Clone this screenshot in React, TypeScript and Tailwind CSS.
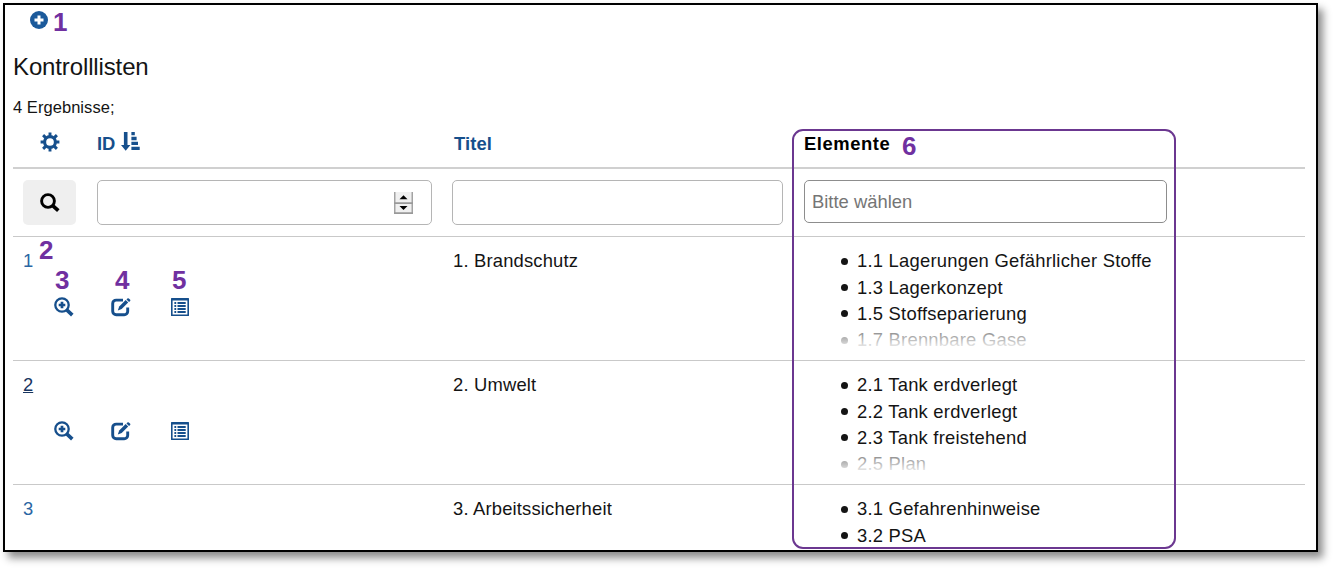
import React from 'react';

type IconProps = { className?: string };

const PlusCircle = ({ className }: IconProps) => (
  <svg viewBox="0 0 18 18" className={className}>
    <circle cx="9" cy="9" r="9" fill="currentColor" />
    <path d="M9 4.5v9M4.5 9h9" stroke="#fff" strokeWidth="3" />
  </svg>
);

const Cog = ({ className }: IconProps) => (
  <svg viewBox="0 0 20 20" className={className} fill="none" stroke="currentColor">
    <circle cx="10" cy="10" r="5.4" strokeWidth="3.1" />
    <path
      d="M10 .6v3.4M10 16v3.4M.6 10h3.4M16 10h3.4M3.1 3.1l2.5 2.5M14.4 14.4l2.5 2.5M16.9 3.1l-2.5 2.5M5.6 14.4l-2.5 2.5"
      strokeWidth="2.9"
    />
  </svg>
);

const SortByAttributes = ({ className }: IconProps) => (
  <svg viewBox="0 0 19 19" className={className} fill="currentColor">
    <path d="M2.9 0h3.6v13h2.9L4.7 18.8 0 13h2.9z" />
    <path d="M10.4 0h3.4v3.3h-3.4zM10.4 4.8h5.2v3.4h-5.2zM10.4 9.8h6.6v3.3h-6.6zM10.4 14.7h8.3V18h-8.3z" />
  </svg>
);

const Search = ({ className }: IconProps) => (
  <svg viewBox="0 0 20 20" className={className} fill="none" stroke="currentColor">
    <circle cx="8" cy="8" r="6.4" strokeWidth="2.9" />
    <path d="M12.4 12.4l5.9 5.3" strokeWidth="3.7" />
  </svg>
);

const ZoomIn = ({ className }: IconProps) => (
  <svg viewBox="0 0 20 20" className={className} fill="none" stroke="currentColor">
    <circle cx="8" cy="8" r="6.7" strokeWidth="2.3" />
    <path d="M12.5 12.6l5.8 5.5" strokeWidth="3.6" />
    <path d="M8 4.7v6.6M4.7 8h6.6" strokeWidth="2.7" />
  </svg>
);

const Edit = ({ className }: IconProps) => (
  <svg viewBox="0 0 20 20" className={className} fill="none" stroke="currentColor">
    <path d="M12 3.1H5.2A3.5 3.5 0 0 0 1.7 6.6v7.7a3.5 3.5 0 0 0 3.5 3.5h8a3.5 3.5 0 0 0 3.5-3.5V10.5" strokeWidth="2.9" />
    <path d="M8.2 9.6l6.5-6.6 2.5 2.4-6.5 6.6-3.9 1.5z" fill="currentColor" stroke="none" />
    <path d="M15.5 2.4l.9-.9q.7-.5 1.4 0l1.4 1.2q.4.6 0 1.2l-1.2 1.1z" fill="currentColor" stroke="none" />
  </svg>
);

const ListAlt = ({ className }: IconProps) => (
  <svg viewBox="0 0 18 18" className={className} fill="currentColor">
    <path fillRule="evenodd" d="M.6 0h16.8q.6 0 .6.6v16.8q0 .6-.6.6H.6q-.6 0-.6-.6V.6Q0 0 .6 0zM1.6 2.6v13.8h14.8V2.6z" />
    <path d="M3.4 4h1.8v1.9H3.4zM3.4 7h1.8v1.9H3.4zM3.4 10h1.8v1.9H3.4zM3.4 13h1.8v1.9H3.4zM6.5 4h8.2v1.9H6.5zM6.5 7h8.2v1.9H6.5zM6.5 10h8.2v1.9H6.5zM6.5 13h8.2v1.9H6.5z" />
  </svg>
);

const Spinner = () => (
  <svg viewBox="0 0 19 22" className="h-[22px] w-[19px]">
    <rect width="19" height="22" fill="#f0f0f0" />
    <path d="M.75 0v22M18.25 0v22" stroke="#a3a3a3" strokeWidth="1.5" />
    <path d="M0 11.2h19M0 21.2h19" stroke="#999" strokeWidth="1.7" />
    <path d="M5.5 7.3l4-4 4 4zM5.5 14h8l-4 4z" fill="#000" />
  </svg>
);

const rows = [
  { id: '1', title: '1. Brandschutz', items: ['1.1 Lagerungen Gefährlicher Stoffe', '1.3 Lagerkonzept', '1.5 Stoffseparierung', '1.7 Brennbare Gase'] },
  { id: '2', title: '2. Umwelt', items: ['2.1 Tank erdverlegt', '2.2 Tank erdverlegt', '2.3 Tank freistehend', '2.5 Plan'] },
  { id: '3', title: '3. Arbeitssicherheit', items: ['3.1 Gefahrenhinweise', '3.2 PSA'] },
];

const markers = [
  { n: '1', pos: 'left-[48px] top-[2px]' },
  { n: '2', pos: 'left-[34px] top-[230px]' },
  { n: '3', pos: 'left-[50px] top-[260px]' },
  { n: '4', pos: 'left-[110px] top-[260px]' },
  { n: '5', pos: 'left-[167px] top-[260px]' },
  { n: '6', pos: 'left-[897px] top-[126px]' },
];

export default function App() {
  return (
    <div className="h-[568px] w-[1338px] overflow-hidden bg-white pl-[3px] pt-[3px] font-['Liberation_Sans',Arial,sans-serif] text-[18.4px] tracking-[0.23px] text-[#141414]">
      <div className="relative h-[549px] w-[1315px] border-2 border-black bg-white pl-2 pr-[11px] shadow-[5px_6px_8px_rgba(0,0,0,0.45)]">
        <div className="flex h-[44px] pl-[17px] pt-[6px] text-[#1b5a9b]">
          <PlusCircle className="size-[18px]" />
        </div>
        <h1 className="h-[45px] text-[24px] leading-[36px] tracking-[-0.13px]">Kontrolllisten</h1>
        <p className="h-[29px] text-[16.5px] leading-[27px] tracking-[0.05px]">4 Ergebnisse;</p>

        <div className="grid h-[46px] grid-cols-[84px_357px_350px_1fr] border-b-2 border-[#d0d0d0] font-bold leading-[42px] text-[#164f8c]">
          <div className="pl-[27px] pt-[9px]"><Cog className="size-[20px]" /></div>
          <div className="flex"><span className="tracking-normal">ID</span><SortByAttributes className="ml-[6px] mt-[9px] size-[19px]" /></div>
          <div className="tracking-[0.1px]">Titel</div>
          <div className="tracking-[0.55px] text-black">Elemente</div>
        </div>

        <div className="grid h-[68px] grid-cols-[84px_355px_352px_1fr] items-start border-b border-[#c9c9c9] pt-[11px]">
          <button className="ml-[10px] flex h-[45px] w-[53px] items-center justify-center rounded-[5px] bg-[#efefef] text-black">
            <Search className="size-[20px]" />
          </button>
          <div className="flex h-[45px] w-[335px] items-center justify-end rounded-[5px] border border-[#b5b5b5] pr-[18px]"><Spinner /></div>
          <div className="h-[45px] w-[331px] rounded-[5px] border border-[#b5b5b5]" />
          <div className="h-[43px] w-[363px] rounded-[5px] border border-[#8d8d8d] pl-[7px] leading-[42px] tracking-[0px] text-[#757575]">Bitte wählen</div>
        </div>

        {rows.map((row, r) => (
          <div key={row.id} className={`grid grid-cols-[440px_351px_1fr] pt-[11px] ${r < 2 ? 'h-[124px] border-b border-[#c9c9c9]' : 'h-[64px]'}`}>
            <div>
              <a className={`ml-[10px] block h-[27px] w-fit leading-[26px] tracking-normal ${row.id === '2' ? 'text-[#18355f] underline' : 'text-[#2a66a3]'}`}>{row.id}</a>
              {r < 2 && (
                <div className="flex items-start pl-[41px] pt-[22px] text-[#164f8c]">
                  <ZoomIn className="size-[20px]" />
                  <Edit className="ml-[37px] size-[20px]" />
                  <ListAlt className="ml-[40px] mt-px size-[18px]" />
                </div>
              )}
            </div>
            <div className="leading-[26px] tracking-[0.18px]">{row.title}</div>
            <div className="relative">
              <ul className="pl-[37px]">
                {row.items.map((item) => (
                  <li key={item} className="flex h-[26.4px] items-center leading-[26px]">
                    <span className="mr-[9px] size-[7px] rounded-full bg-[#141414]" />
                    {item}
                  </li>
                ))}
              </ul>
              {r < 2 && <div className="absolute inset-x-0 top-[75px] h-[31px] bg-linear-to-b from-white/30 to-white to-90%" />}
            </div>
          </div>
        ))}

        <div className="pointer-events-none absolute left-[787px] top-[124px] h-[420px] w-[384px] rounded-[11px] border-2 border-[#6b3790]" />
        {markers.map((m) => (
          <span key={m.n} className={`absolute text-[26px] font-bold leading-[30px] tracking-normal text-[#7030a0] ${m.pos}`}>{m.n}</span>
        ))}
      </div>
    </div>
  );
}
